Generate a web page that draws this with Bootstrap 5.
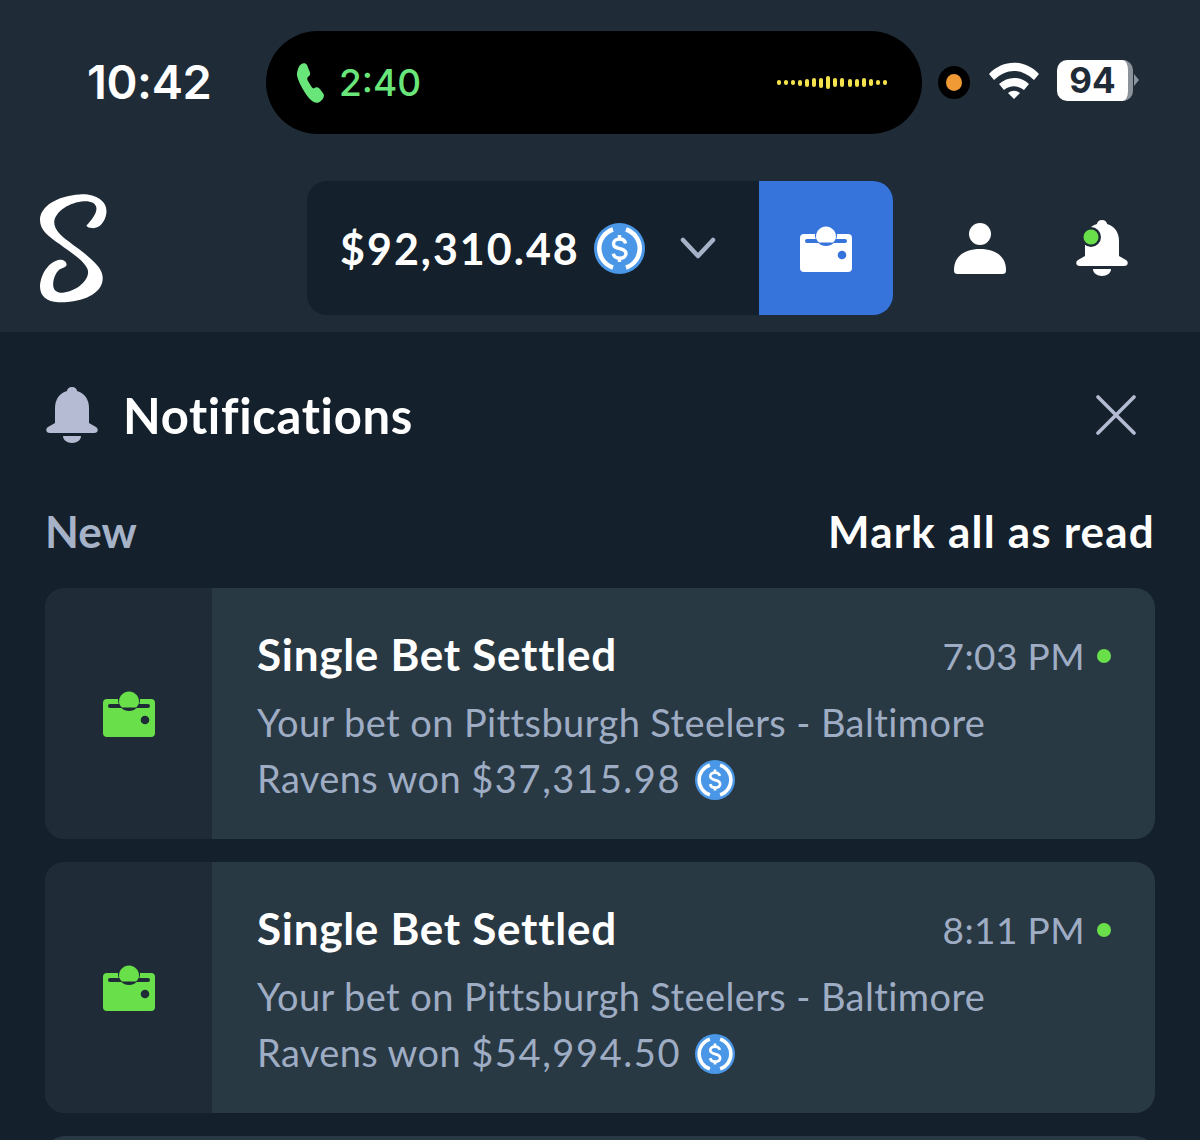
<!DOCTYPE html>
<html lang="en">
<head>
<meta charset="utf-8">
<title>Notifications</title>
<link href="https://cdn.jsdelivr.net/npm/bootstrap@5.3.0/dist/css/bootstrap.min.css" rel="stylesheet">
<style>
html,body{height:1140px;overflow:hidden}
body{background:#14202b;font-family:"Lato","Open Sans",sans-serif;color:#fff}
.top-shell{background:#1f2c38;height:332px}
.status-row{height:181px;padding:31px 0 0 87px}
.clock{font-family:"Inter",sans-serif;font-weight:600;font-size:47px;line-height:101px;width:179px;letter-spacing:-.4px;height:103px}
.island{width:656px;height:103px;background:#000;border-radius:52px;padding:0 35px 0 29px}
.call-time{font-family:"Inter",sans-serif;font-weight:500;font-size:37px;color:#69e67a;margin-left:12px;line-height:1}
.wave{gap:3.1px}
.wave i{display:block;width:4px;background:#f5e34e;border-radius:2px}
.rec{width:32px;height:33px;background:#000;border-radius:50%;margin:0 0 0 16px;flex:none}
.rec i{display:block;width:16px;height:17px;background:#f09a35;border-radius:50%}
.wifi-ic{margin:0 0 5px 19px}
.batt{width:76px;height:41px;background:#fff;border-radius:10px;color:#1f2c38;font-family:"Inter",sans-serif;font-weight:700;font-size:35px;line-height:41px;text-align:center;margin:0 0 5px 18px;border-right:5px solid #8b929a}
.batt-tip{width:0;height:0;border-left:5px solid #8b929a;border-top:6px solid transparent;border-bottom:6px solid transparent;margin:0 0 5px 1px}
.nav-row{height:134px;padding-left:40px}
.logo-box{width:267px;padding-top:2px}
.wallet-box{width:586px;height:134px;background:#14202b;border-radius:20px;overflow:hidden}
.bal-part{width:452px;padding-left:33px}
.bal-num{font-weight:700;font-size:43px;line-height:1;letter-spacing:2px}
.bal-coin{margin-left:14px}
.wallet-btn{width:134px;background:#3673db}
.user-btn{margin-left:61px}
.bell-btn{margin-left:70px}
.panel{padding:0 45px}
.notif-head{height:168px;padding-bottom:2px}
.notif-title{font-weight:700;font-size:49px;line-height:1;margin-left:25px;letter-spacing:.65px}
.new-label{color:#a6b2c7;font-weight:700;font-size:44px;line-height:1}
.mark-label{font-weight:700;font-size:44px;line-height:1;letter-spacing:1.2px}
.sub-row{height:88px;padding-bottom:27px}
.note-card{height:251px;border:0;border-radius:20px;background:#293944;margin-bottom:23px;overflow:hidden;color:#fff}
.note-icon{width:167px;background:#1f2c38}
.note-body{padding:42px 44px 0 45px}
.note-title{font-weight:700;font-size:44px;line-height:52px;letter-spacing:.72px;margin-top:-4px}
.note-time{font-size:37px;color:#9fadc4;line-height:52px;letter-spacing:.4px}
.live-dot{width:14px;height:14px;background:#69e04a;border-radius:50%;margin-left:12px}
.note-text{font-size:38px;line-height:56px;color:#9fadc4;margin-top:12px;letter-spacing:.4px}
.amount{letter-spacing:1.6px}
.coin-inline{vertical-align:-7px;margin-left:14px}
</style>
</head>
<body>
<header class="top-shell">
  <div class="status-row d-flex align-items-start">
    <div class="clock">10:42</div>
    <div class="island d-flex align-items-center justify-content-between">
      <div class="d-flex align-items-center">
        <svg width="32" height="42" viewBox="0 0 32 42"><path d="M3 5c2-4 7-5 9-2l3 7c1 2 0 4-2 5-1 1-1 2 0 4l4 6c1 1 2 2 3 1 2-1 4-1 6 1l4 5c1 2 0 5-3 7-3 3-8 2-12-2C9 31 2 19 1 13c0-3 1-6 2-8z" fill="#69e67a" transform="translate(1 0) scale(.92 1)"/></svg>
        <span class="call-time">2:40</span>
      </div>
      <div class="wave d-flex align-items-center">
        <i style="height:5px"></i><i style="height:5px"></i><i style="height:5px"></i><i style="height:6px"></i><i style="height:8px"></i><i style="height:9px"></i><i style="height:10px"></i><i style="height:13px"></i><i style="height:9px"></i><i style="height:9px"></i><i style="height:8px"></i><i style="height:8px"></i><i style="height:9px"></i><i style="height:7px"></i><i style="height:5px"></i><i style="height:5px"></i>
      </div>
    </div>
    <div class="d-flex align-items-center" style="height:103px">
      <div class="rec d-flex align-items-center justify-content-center"><i></i></div>
      <svg class="wifi-ic" width="50" height="37" viewBox="0 0 50 37"><path d="M0 12C14-3 36-3 50 12l-5 6C32 6 18 6 5 18z" fill="#fff"/><path d="M10 22c9-8 21-8 30 0l-5 6c-6-5-14-5-20 0z" fill="#fff"/><path d="M19 31c4-3 8-3 12 0l-6 6z" fill="#fff"/></svg>
      <div class="batt">94</div><div class="batt-tip"></div>
    </div>
  </div>
  <div class="nav-row d-flex align-items-center">
    <div class="logo-box">
      <svg class="d-block" width="68" height="112" viewBox="45 25 205 335"><path d="M165 28C215 25 250 50 245 85C242 110 225 130 205 130C195 130 186 127 185 122C200 105 217 85 215 68C213 52 195 46 170 49C125 55 88 85 88 112C88 150 145 175 190 215C225 245 240 265 232 295C220 335 160 355 100 353C65 352 45 335 45 305C47 265 75 228 105 225C118 225 126 232 125 241C122 250 110 250 102 256C92 265 83 285 85 305C87 320 100 327 118 324C155 318 190 290 190 262C190 235 140 205 105 178C70 155 45 135 45 105C45 65 95 32 165 28Z" fill="#fff"/></svg>
    </div>
    <div class="wallet-box d-flex">
      <div class="bal-part d-flex align-items-center">
        <span class="bal-num">$92,310.48</span>
        <svg class="bal-coin" width="51" height="51" viewBox="0 0 51 51"><use href="#coin"/></svg>
        <svg style="margin-left:35px" width="36" height="24" viewBox="0 0 36 24"><path d="M3 4l15 16L33 4" fill="none" stroke="#a6b2c7" stroke-width="4.500" stroke-linecap="round" stroke-linejoin="round"/></svg>
      </div>
      <div class="wallet-btn d-flex align-items-center justify-content-center">
        <svg width="52" height="47" viewBox="0 0 52 47"><use href="#wallet" fill="#fff" color="#3673db"/></svg>
      </div>
    </div>
    <div class="user-btn">
      <svg class="d-block" width="52" height="52" viewBox="0 0 52 52"><circle cx="26" cy="12" r="11" fill="#fff"/><path d="M0 48C0 34 11 27 26 27s26 7 26 21c0 3-1 4-4 4H4c-3 0-4-1-4-4z" fill="#fff"/></svg>
    </div>
    <div class="bell-btn position-relative">
      <svg class="d-block" width="52" height="56" viewBox="0 0 52 56"><use href="#bell" fill="#fff"/><circle cx="15" cy="17" r="10" fill="#1f2c38"/><circle cx="15" cy="17" r="7.500" fill="#69e04a"/></svg>
    </div>
  </div>
</header>
<main class="panel">
  <div class="notif-head d-flex align-items-center justify-content-between">
    <div class="d-flex align-items-center" style="margin-left:1px">
      <svg width="52" height="56" viewBox="0 0 52 56"><use href="#bell" fill="#b4bbd2"/></svg>
      <span class="notif-title">Notifications</span>
    </div>
    <svg style="margin-right:19px" width="40" height="40" viewBox="0 0 40 40"><path d="M2 2l36 36M38 2L2 38" stroke="#b4bbd2" stroke-width="3.600" stroke-linecap="round"/></svg>
  </div>
  <div class="sub-row d-flex align-items-center justify-content-between">
    <span class="new-label">New</span><span class="mark-label">Mark all as read</span>
  </div>
  <div class="card note-card flex-row">
    <div class="note-icon d-flex align-items-center justify-content-center"><svg width="52" height="47" viewBox="0 0 52 47"><use href="#wallet" fill="#69e04a" color="#1f2c38"/></svg></div>
    <div class="note-body flex-grow-1">
      <div class="d-flex align-items-center justify-content-between"><span class="note-title">Single Bet Settled</span><span class="d-flex align-items-center"><span class="note-time">7:03 PM</span><i class="live-dot"></i></span></div>
      <div class="note-text">Your bet on Pittsburgh Steelers - Baltimore<br>Ravens won <span class="amount">$37,315.98</span><svg class="coin-inline" width="40" height="40" viewBox="0 0 51 51"><use href="#coin"/></svg></div>
    </div>
  </div>
  <div class="card note-card flex-row">
    <div class="note-icon d-flex align-items-center justify-content-center"><svg width="52" height="47" viewBox="0 0 52 47"><use href="#wallet" fill="#69e04a" color="#1f2c38"/></svg></div>
    <div class="note-body flex-grow-1">
      <div class="d-flex align-items-center justify-content-between"><span class="note-title">Single Bet Settled</span><span class="d-flex align-items-center"><span class="note-time">8:11 PM</span><i class="live-dot"></i></span></div>
      <div class="note-text">Your bet on Pittsburgh Steelers - Baltimore<br>Ravens won <span class="amount">$54,994.50</span><svg class="coin-inline" width="40" height="40" viewBox="0 0 51 51"><use href="#coin"/></svg></div>
    </div>
  </div>
  <div class="card note-card"></div>
</main>
<svg width="0" height="0" class="position-absolute">
  <defs>
    <g id="coin">
      <circle cx="25.500" cy="25.500" r="25.500" fill="#4a97e8"/>
      <path d="M19 6.500A20 20 0 0 0 19 44.500M32 6.500A20 20 0 0 1 32 44.500" fill="none" stroke="#fff" stroke-width="4.500"/>
      <path d="M31.500 20.500c-.5-3-3-4.500-6-4.500-3.500 0-6 2-6 4.800 0 6.700 12.500 3 12.500 9.700 0 3-2.800 4.700-6.500 4.700-3.200 0-5.500-1.500-6.200-4.500M25.500 12v4M25.500 35v4" fill="none" stroke="#fff" stroke-width="3.400"/>
    </g>
    <g id="wallet">
      <rect x="0" y="9" width="52" height="38" rx="4"/>
      <circle cx="26" cy="10" r="11" fill="currentColor"/>
      <rect x="5" y="14" width="42" height="4" rx="2" fill="currentColor"/>
      <path d="M16.200 13.500A10 10 0 1 1 35.800 13.500A10 10 0 0 1 33 17.500H19A10 10 0 0 1 16.200 13.500Z"/>
      <circle cx="42" cy="30" r="4.300" fill="currentColor"/>
    </g>
    <g id="bell">
      <path d="M26 0c3 0 5 2 5 4 8 2 12 9 12 17v15l7 4c3 2 2 6-2 6H4c-4 0-5-4-2-6l7-4V21C9 13 13 6 21 4c0-2 2-4 5-4z"/>
      <path d="M17 49h18c0 4-4 7-9 7s-9-3-9-7z"/>
    </g>
  </defs>
</svg>
</body>
</html>
